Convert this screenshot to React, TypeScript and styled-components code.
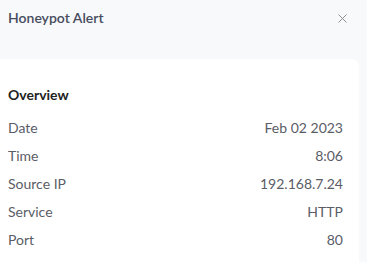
import React from "react";
import styled, { createGlobalStyle } from "styled-components";

const Global = createGlobalStyle`
  html, body { margin: 0; padding: 0; background: #f8f9fa; }
  body { font-family: Lato, "Open Sans", sans-serif; }
`;

const Page = styled.div`
  width: 367px;
  height: 262px;
  overflow: hidden;
  background: #f8f9fa;
  display: flex;
  flex-direction: column;
`;

const Header = styled.div`
  height: 59px;
  display: flex;
  align-items: flex-start;
  justify-content: space-between;
  padding: 8px 20px 0 8px;
  box-sizing: border-box;
`;

const Title = styled.h1`
  margin: 0;
  font-size: 14px;
  line-height: 20px;
  font-weight: 600;
  color: #464c5e;
`;

const Close = styled.button`
  border: 0;
  background: none;
  padding: 0;
  margin-top: 6px;
  width: 9px;
  height: 9px;
  display: flex;
  cursor: pointer;
`;

const Card = styled.section`
  width: 359px;
  flex: 1;
  background: #ffffff;
  border-top-right-radius: 8px;
  padding: 26px 16px 0 8px;
  box-sizing: border-box;
`;

const SectionTitle = styled.h2`
  margin: 0 0 8px 0;
  font-size: 14px;
  line-height: 20px;
  font-weight: 700;
  color: #222222;
`;

const Row = styled.div`
  display: flex;
  justify-content: space-between;
  align-items: center;
  height: 28px;
  font-size: 14px;
  color: #5a5d66;
`;

const rows: [string, string][] = [
  ["Date", "Feb 02 2023"],
  ["Time", "8:06"],
  ["Source IP", "192.168.7.24"],
  ["Service", "HTTP"],
  ["Port", "80"],
];

export default function App() {
  return (
    <Page>
      <Global />
      <Header>
        <Title>Honeypot Alert</Title>
        <Close aria-label="Close">
          <svg width="9" height="9" viewBox="0 0 9 9">
            <path d="M0.5 0.5 L8.5 8.5 M8.5 0.5 L0.5 8.5" stroke="#8e9096" strokeWidth="1" />
          </svg>
        </Close>
      </Header>
      <Card>
        <SectionTitle>Overview</SectionTitle>
        {rows.map(([k, v]) => (
          <Row key={k}>
            <span>{k}</span>
            <span>{v}</span>
          </Row>
        ))}
      </Card>
    </Page>
  );
}
